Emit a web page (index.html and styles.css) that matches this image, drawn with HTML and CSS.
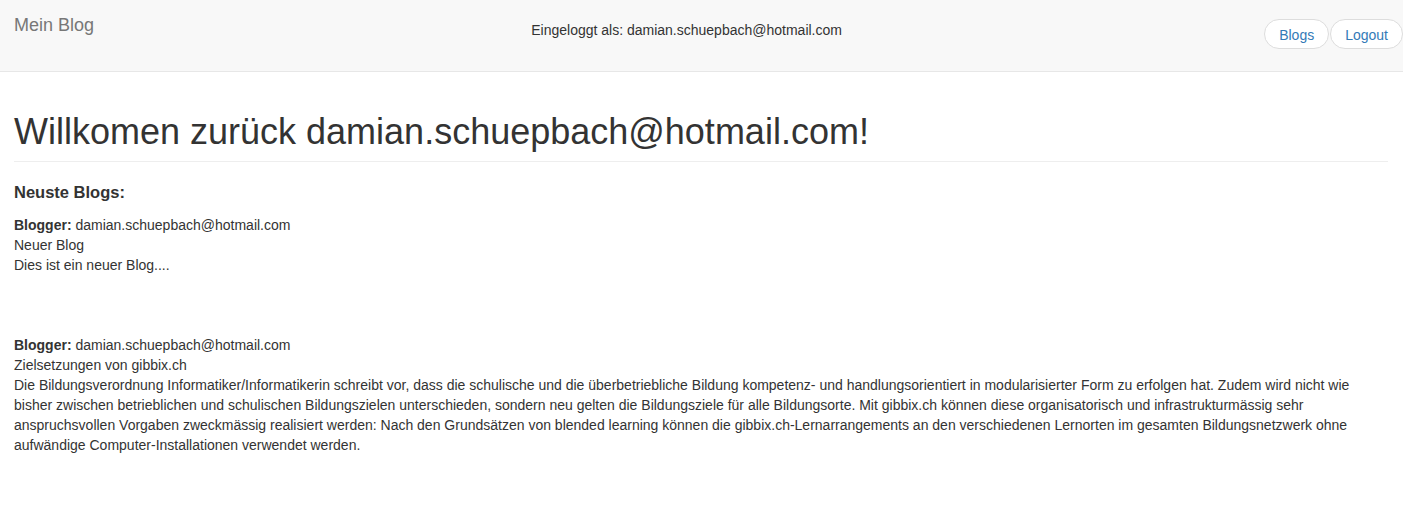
FILE: index.html
```html
<!doctype html>
<html>

<head>
	<meta charset="utf-8">
	<title>Mein Blog</title>
	<link rel="stylesheet" href="styles.css">
</head>

<body>
	<nav class="navbar">
		<a class="navbar-brand" href="#">Mein Blog</a>
		<p class="navbar-text">Eingeloggt als: damian.schuepbach@hotmail.com</p>
		<div class="navbar-buttons">
			<a class="btn-pill" href="#">Blogs</a>
			<a class="btn-pill" href="#">Logout</a>
		</div>
	</nav>

	<div class="container">
		<h1 class="page-header">Willkomen zurück damian.schuepbach@hotmail.com!</h1>
		<h4 class="section-title">Neuste Blogs:</h4>

		<div class="blog">
			<div><b>Blogger:</b> damian.schuepbach@hotmail.com</div>
			<div>Neuer Blog</div>
			<div>Dies ist ein neuer Blog....</div>
		</div>

		<div class="blog">
			<div><b>Blogger:</b> damian.schuepbach@hotmail.com</div>
			<div>Zielsetzungen von gibbix.ch</div>
			<div>Die Bildungsverordnung Informatiker/Informatikerin schreibt vor, dass die schulische und die überbetriebliche Bildung kompetenz- und handlungsorientiert in modularisierter Form zu erfolgen hat. Zudem wird nicht wie bisher zwischen betrieblichen und schulischen Bildungszielen unterschieden, sondern neu gelten die Bildungsziele für alle Bildungsorte. Mit gibbix.ch können diese organisatorisch und infrastrukturmässig sehr anspruchsvollen Vorgaben zweckmässig realisiert werden: Nach den Grundsätzen von blended learning können die gibbix.ch-Lernarrangements an den verschiedenen Lernorten im gesamten Bildungsnetzwerk ohne aufwändige Computer-Installationen verwendet werden.</div>
		</div>
	</div>
</body>

</html>
```

FILE: styles.css
```css
body {
	margin: 0;
	font-family: "Liberation Sans", Arial, sans-serif;
	font-size: 14px;
	line-height: 20px;
	color: #333;
	background-color: #fff;
}

.navbar {
	display: flex;
	align-items: flex-start;
	height: 71px;
	background-color: #f8f8f8;
	border-bottom: 1px solid #e7e7e7;
	margin-bottom: 20px;
}

.navbar-brand {
	padding: 15px 15px 15px 14px;
	font-size: 18px;
	line-height: 20px;
	color: #777;
	text-decoration: none;
}

.navbar-text {
	flex: 1;
	margin: 20px 0 0;
	text-align: center;
}

.navbar-buttons {
	display: flex;
	gap: 1px;
	margin-top: 19px;
}

.btn-pill {
	display: block;
	padding: 5px 14px 3px;
	border: 1px solid #ddd;
	border-radius: 15px;
	background-color: #fff;
	color: #337ab7;
	text-decoration: none;
}

.container {
	padding: 0 15px 0 14px;
}

.page-header {
	margin: 40px 0 20px;
	padding-bottom: 9px;
	border-bottom: 1px solid #eee;
	font-size: 36px;
	font-weight: normal;
	line-height: 1.1;
}

.section-title {
	margin: 0 0 13px;
	font-size: 16.5px;
	font-weight: bold;
	line-height: 20px;
}

.blog {
	margin-bottom: 60px;
}
```
